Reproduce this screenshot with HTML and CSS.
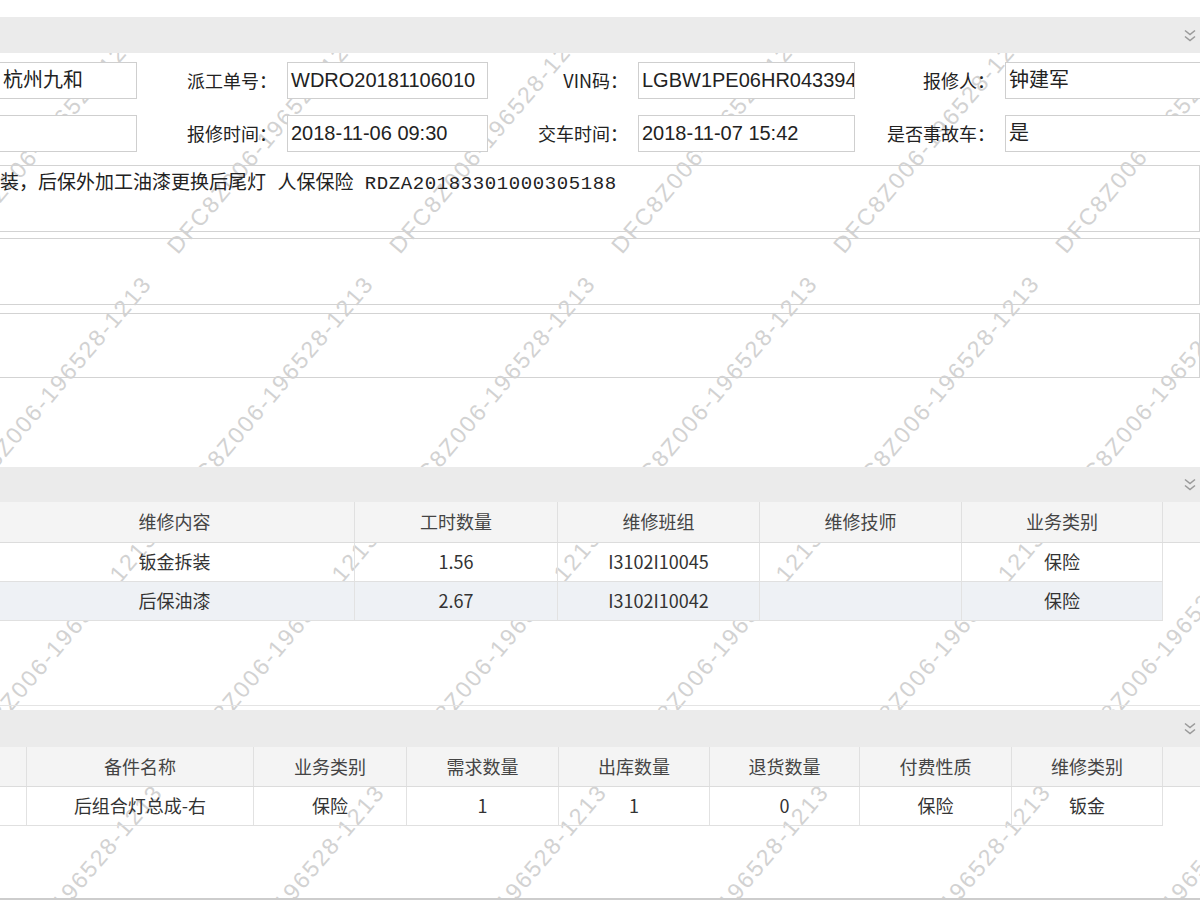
FILE: index.html
```html
<!DOCTYPE html>
<html lang="zh-CN">
<head>
<meta charset="utf-8">
<title>维修工单</title>
<link rel="stylesheet" href="styles.css">
</head>
<body>
<div class="page">
  <div class="wm" aria-hidden="true">
    <div class="wm-line"><span>DFC8Z006-196528-1213</span><span>DFC8Z006-196528-1213</span><span>DFC8Z006-196528-1213</span><span>DFC8Z006-196528-1213</span><span>DFC8Z006-196528-1213</span><span>DFC8Z006-196528-1213</span></div>
    <div class="wm-line"><span>DFC8Z006-196528-1213</span><span>DFC8Z006-196528-1213</span><span>DFC8Z006-196528-1213</span><span>DFC8Z006-196528-1213</span><span>DFC8Z006-196528-1213</span><span>DFC8Z006-196528-1213</span></div>
    <div class="wm-line"><span>DFC8Z006-196528-1213</span><span>DFC8Z006-196528-1213</span><span>DFC8Z006-196528-1213</span><span>DFC8Z006-196528-1213</span><span>DFC8Z006-196528-1213</span><span>DFC8Z006-196528-1213</span></div>
    <div class="wm-line"><span>DFC8Z006-196528-1213</span><span>DFC8Z006-196528-1213</span><span>DFC8Z006-196528-1213</span><span>DFC8Z006-196528-1213</span><span>DFC8Z006-196528-1213</span><span>DFC8Z006-196528-1213</span></div>
    <div class="wm-line"><span>DFC8Z006-196528-1213</span><span>DFC8Z006-196528-1213</span><span>DFC8Z006-196528-1213</span><span>DFC8Z006-196528-1213</span><span>DFC8Z006-196528-1213</span><span>DFC8Z006-196528-1213</span></div>
    <div class="wm-line"><span>DFC8Z006-196528-1213</span><span>DFC8Z006-196528-1213</span><span>DFC8Z006-196528-1213</span><span>DFC8Z006-196528-1213</span><span>DFC8Z006-196528-1213</span><span>DFC8Z006-196528-1213</span></div>
    <div class="wm-line"><span>DFC8Z006-196528-1213</span><span>DFC8Z006-196528-1213</span><span>DFC8Z006-196528-1213</span><span>DFC8Z006-196528-1213</span><span>DFC8Z006-196528-1213</span><span>DFC8Z006-196528-1213</span></div>
    <div class="wm-line"><span>DFC8Z006-196528-1213</span><span>DFC8Z006-196528-1213</span><span>DFC8Z006-196528-1213</span><span>DFC8Z006-196528-1213</span><span>DFC8Z006-196528-1213</span><span>DFC8Z006-196528-1213</span></div>
    <div class="wm-line"><span>DFC8Z006-196528-1213</span><span>DFC8Z006-196528-1213</span><span>DFC8Z006-196528-1213</span><span>DFC8Z006-196528-1213</span><span>DFC8Z006-196528-1213</span><span>DFC8Z006-196528-1213</span></div>
    <div class="wm-line"><span>DFC8Z006-196528-1213</span><span>DFC8Z006-196528-1213</span><span>DFC8Z006-196528-1213</span><span>DFC8Z006-196528-1213</span><span>DFC8Z006-196528-1213</span><span>DFC8Z006-196528-1213</span></div>
  </div>

  <div class="content">
    <section class="panel panel-info">
      <div class="bar">
        <svg class="chev" viewBox="0 0 14 15"><path d="M2 2.5 L7 6.5 L12 2.5 M2 8.5 L7 12.5 L12 8.5" fill="none" stroke="#9a9a9a" stroke-width="1.6"/></svg>
      </div>
      <div class="form">
        <div class="field">杭州九和</div>
        <div class="lbl">派工单号：</div>
        <div class="field">WDRO20181106010</div>
        <div class="lbl">VIN码：</div>
        <div class="field">LGBW1PE06HR043394</div>
        <div class="lbl">报修人：</div>
        <div class="field">钟建军</div>

        <div class="field"></div>
        <div class="lbl">报修时间：</div>
        <div class="field">2018-11-06 09:30</div>
        <div class="lbl">交车时间：</div>
        <div class="field">2018-11-07 15:42</div>
        <div class="lbl">是否事故车：</div>
        <div class="field">是</div>
      </div>
      <div class="memo memo-1">装，后保外加工油漆更换后尾灯 人保保险 <span class="code">RDZA20183301000305188</span></div>
      <div class="memo memo-2"></div>
      <div class="memo memo-3"></div>
    </section>

    <section class="panel panel-work">
      <div class="bar bar-work">
        <svg class="chev" viewBox="0 0 14 15"><path d="M2 2.5 L7 6.5 L12 2.5 M2 8.5 L7 12.5 L12 8.5" fill="none" stroke="#9a9a9a" stroke-width="1.6"/></svg>
      </div>
      <div class="grid-head work-cols">
        <div class="th">维修内容</div>
        <div class="th">工时数量</div>
        <div class="th">维修班组</div>
        <div class="th">维修技师</div>
        <div class="th">业务类别</div>
        <div class="th th-fill"></div>
      </div>
      <div class="grid-row work-cols">
        <div class="td">钣金拆装</div>
        <div class="td">1.56</div>
        <div class="td">I3102I10045</div>
        <div class="td"></div>
        <div class="td">保险</div>
      </div>
      <div class="grid-row work-cols alt">
        <div class="td">后保油漆</div>
        <div class="td">2.67</div>
        <div class="td">I3102I10042</div>
        <div class="td"></div>
        <div class="td">保险</div>
      </div>
    </section>

    <section class="panel panel-parts">
      <div class="bar bar-parts">
        <svg class="chev" viewBox="0 0 14 15"><path d="M2 2.5 L7 6.5 L12 2.5 M2 8.5 L7 12.5 L12 8.5" fill="none" stroke="#9a9a9a" stroke-width="1.6"/></svg>
      </div>
      <div class="grid-head parts-cols parts-head">
        <div class="th"></div>
        <div class="th">备件名称</div>
        <div class="th">业务类别</div>
        <div class="th">需求数量</div>
        <div class="th">出库数量</div>
        <div class="th">退货数量</div>
        <div class="th">付费性质</div>
        <div class="th">维修类别</div>
        <div class="th th-fill"></div>
      </div>
      <div class="grid-row parts-cols">
        <div class="td"></div>
        <div class="td">后组合灯总成-右</div>
        <div class="td">保险</div>
        <div class="td">1</div>
        <div class="td">1</div>
        <div class="td">0</div>
        <div class="td">保险</div>
        <div class="td">钣金</div>
      </div>
    </section>
  </div>
</div>
</body>
</html>
```

FILE: styles.css
```css
* { box-sizing: border-box; }

html, body {
  margin: 0;
  padding: 0;
  background: #fff;
}

body {
  font-family: "Noto Sans CJK SC", "Liberation Sans", sans-serif;
  color: #333;
}

.page {
  position: relative;
  width: 1200px;
  height: 900px;
  overflow: hidden;
  background: #fff;
}

/* watermark layer (behind the panels) */
.wm {
  position: absolute;
  left: -613px;
  top: 521px;
  width: 1700px;
  height: 1700px;
  transform-origin: 0 0;
  transform: rotate(-49.6deg);
  z-index: 0;
  pointer-events: none;
  font-family: "Liberation Sans", sans-serif;
  font-size: 23px;
  letter-spacing: 2px;
  color: #d2d2d2;
}

.wm-line {
  height: 169px;
  line-height: 169px;
  white-space: nowrap;
}

.wm-line span {
  display: inline-block;
  width: 334px;
}

.wm-line:nth-child(1) { padding-left: 93px; }
.wm-line:nth-child(2) { padding-left: 237px; }
.wm-line:nth-child(3) { padding-left: 47px; }
.wm-line:nth-child(4) { padding-left: 191px; }
.wm-line:nth-child(5) { padding-left: 1px; }
.wm-line:nth-child(6) { padding-left: 145px; }
.wm-line:nth-child(7) { padding-left: 289px; }
.wm-line:nth-child(8) { padding-left: 99px; }
.wm-line:nth-child(9) { padding-left: 243px; }
.wm-line:nth-child(10) { padding-left: 53px; }

.content {
  position: relative;
  z-index: 1;
  padding-top: 17px;
}

/* collapsible panel title bars */
.bar {
  height: 36px;
  background: #ebebeb;
  display: flex;
  justify-content: flex-end;
  align-items: center;
  padding-right: 3px;
}

.bar-work { height: 35px; }
.bar-parts { height: 37px; }

.chev {
  width: 14px;
  height: 15px;
  display: block;
}

/* form */
.form {
  display: grid;
  grid-template-columns: 138px 150px 201px 150px 217px 150px 1fr;
  grid-auto-rows: 37px;
  row-gap: 16px;
  margin: 9px 0 0 -1px;
  width: 1212px;
}

.field {
  background: #fff;
  border: 1px solid #cfcfcf;
  font-family: "Liberation Sans", "Noto Sans CJK SC", sans-serif;
  font-size: 20px;
  color: #222;
  line-height: 34px;
  padding-left: 3px;
  white-space: nowrap;
  overflow: hidden;
}

.lbl {
  font-size: 18px;
  color: #222;
  text-align: right;
  padding-right: 10px;
  line-height: 37px;
  white-space: nowrap;
}

/* memo boxes */
.memo {
  border: 1px solid #d3d3d3;
  margin-left: -2px;
  width: 1202px;
}

.memo-1 {
  margin-top: 13px;
  height: 67px;
  padding: 5px 0 0 1px;
  font-family: "Liberation Mono", "Noto Sans CJK SC", monospace;
  font-size: 19px;
  line-height: 26px;
  color: #222;
  white-space: nowrap;
}

.memo-1 .code {
  letter-spacing: 0.6px;
}

.memo-2 {
  margin-top: 6px;
  height: 67px;
}

.memo-3 {
  margin-top: 8px;
  height: 65px;
}

/* panels */
.panel-work {
  margin-top: 89px;
}

.panel-parts {
  margin-top: 84px;
  border-top: 1px solid #e4e4e4;
  border-bottom: 2px solid #cdcdcd;
  padding-top: 4px;
  height: 195px;
}

/* grids */
.grid-head,
.grid-row {
  display: grid;
  font-size: 18px;
}

.grid-head {
  background: #f4f4f4;
  border-bottom: 1px solid #dcdcdc;
  height: 41px;
}

.parts-head { height: 40px; }

.grid-row {
  border-bottom: 1px solid #e0e0e0;
  height: 39px;
}

.grid-row.alt {
  background: #eef1f5;
}

.work-cols {
  grid-template-columns: 360px 203px 202px 202px 201px 1fr;
  margin-left: -5px;
}

.grid-head.work-cols { width: 1212px; }
.grid-row.work-cols { width: 1168px; }

.parts-cols {
  grid-template-columns: 37px 227px 153px 152px 151px 150px 152px 151px 1fr;
  margin-left: -10px;
}

.grid-head.parts-cols { width: 1222px; }
.grid-row.parts-cols { width: 1173px; }

.th {
  text-align: center;
  line-height: 39px;
  color: #444;
  border-right: 1px solid #e0e0e0;
  white-space: nowrap;
}

.th-fill { border-right: 0; }

.td {
  text-align: center;
  line-height: 37px;
  color: #333;
  border-right: 1px solid #e2e2e2;
  white-space: nowrap;
}
```
